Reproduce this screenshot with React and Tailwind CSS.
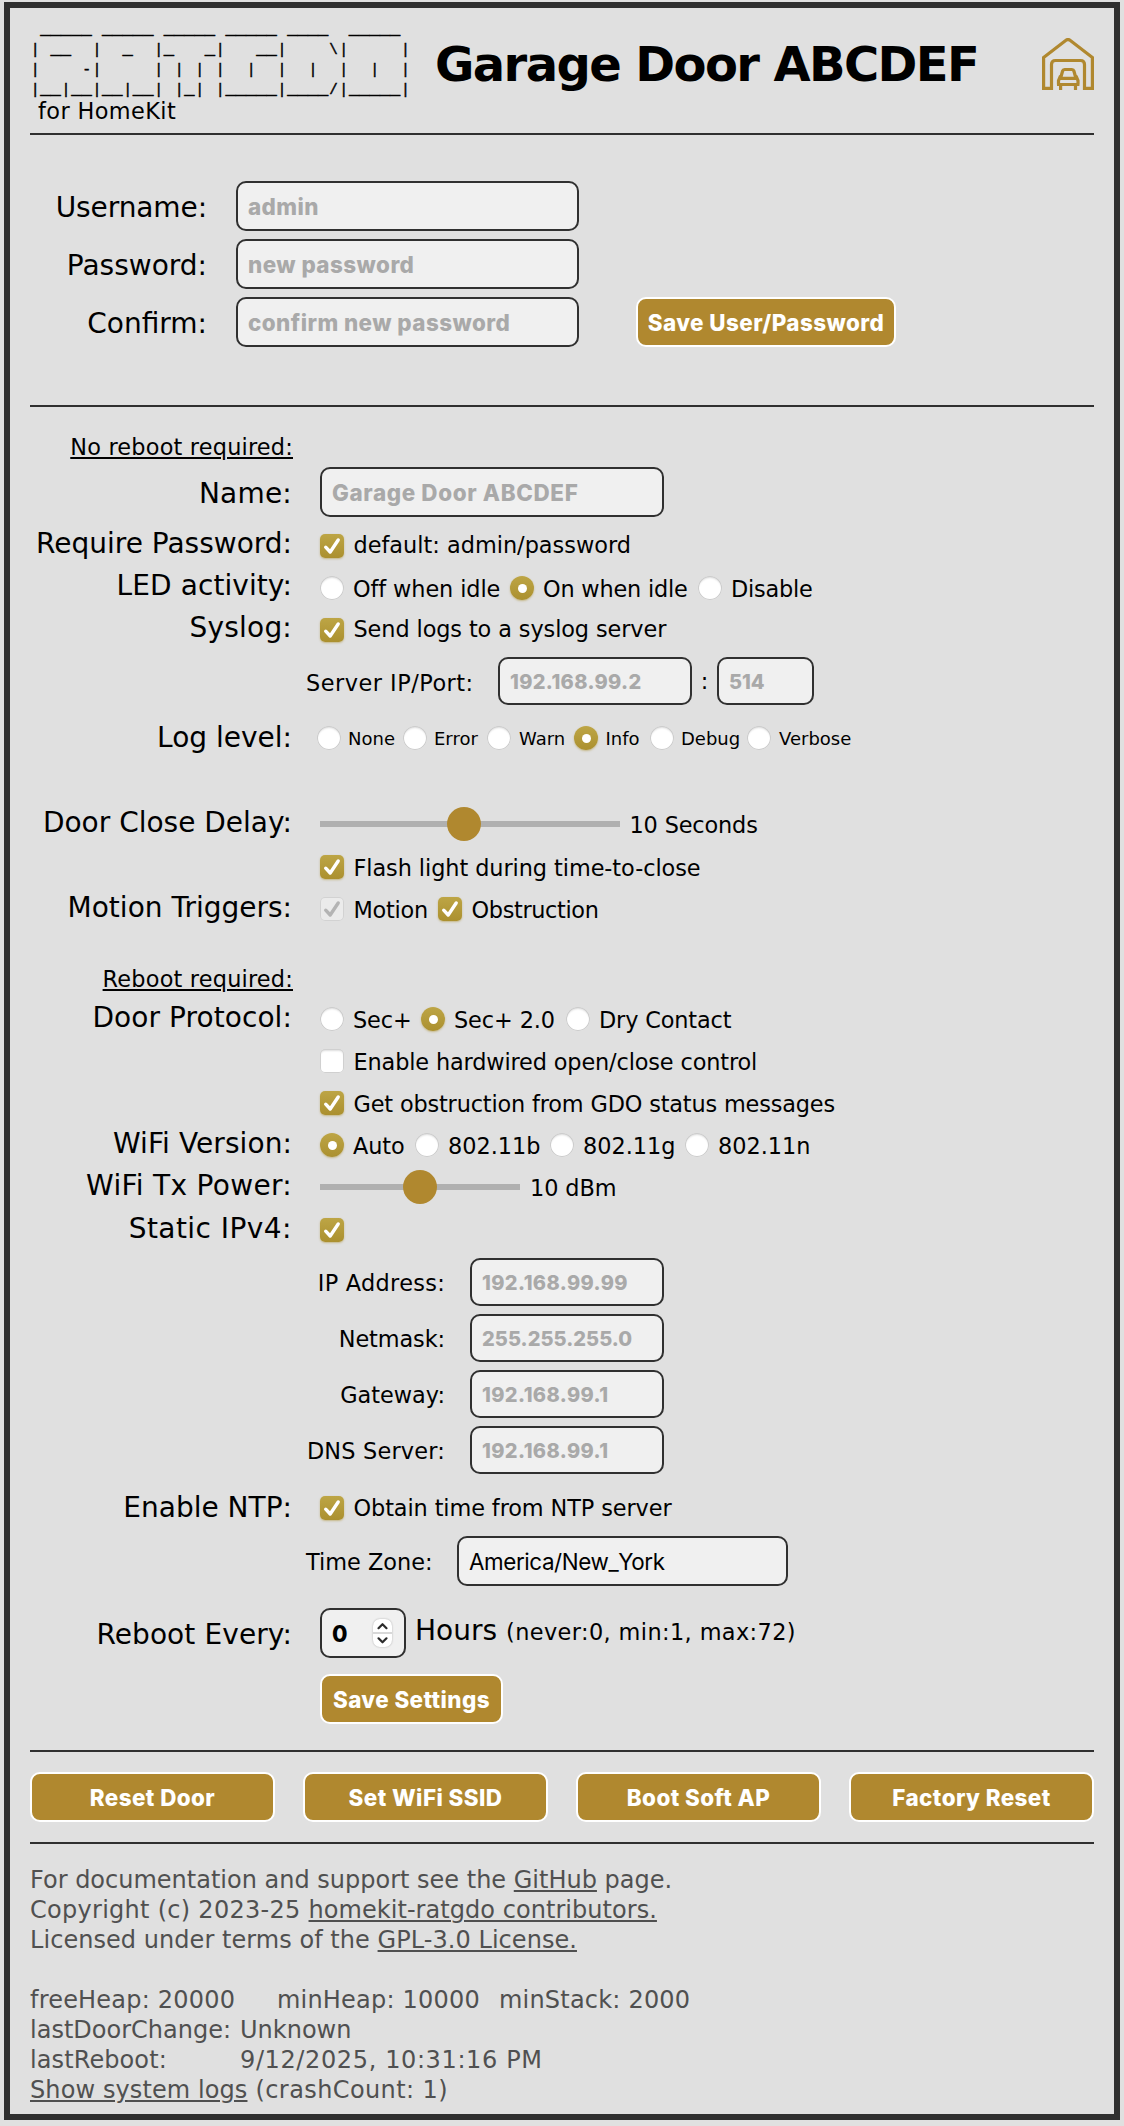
import React from "react";

const LOGO = [
  " _____ _____ _____ _____ ____  _____ ",
  "| __  |  _  |_   _|   __|    \\|     |",
  "|    -|     | | | |  |  |  |  |  |  |",
  "|__|__|__|__| |_| |_____|____/|_____|",
];

function Logo() {
  return (
    <pre className="font-['Liberation_Mono',monospace] text-[17.15px] leading-5 [-webkit-text-stroke:0.5px_black]">
      {LOGO.map((line, i) => (
        <div key={i} className="h-5">
          {line.split(/([|\\/-])/).map((part, j) =>
            j % 2 ? (
              <span key={j} className="inline-block w-[10.29px] text-center text-[14px] leading-[14px]">{part}</span>
            ) : (
              <span key={j}>{part}</span>
            )
          )}
        </div>
      ))}
    </pre>
  );
}

function GarageIcon() {
  return (
    <svg width="52" height="52" viewBox="0 0 52 52" fill="none" stroke="#b0882f" strokeWidth="3.2">
      <path d="M1.6 50.4V19.6L24 2.3Q26 .8 28 2.3L50.4 19.6V50.4H42.5V26.5Q42.5 22.5 38.5 22.5H13.5Q9.5 22.5 9.5 26.5V50.4Z" />
      <path d="M18.5 40.5L20.6 33Q21 31.5 22.6 31.5H29.9Q31.5 31.5 31.9 33L34 40.5M17.5 40.3H35M16.5 46.5V42.5L18.5 38M36 46.5V42.5L34 38M15 46.5H37.4M18.6 46.5V52M33.5 46.5V52" />
    </svg>
  );
}

function Tick({ color }) {
  return (
    <svg width="24" height="24" viewBox="0 0 24 24" fill="none" stroke={color} strokeWidth="3.4" strokeLinecap="round" strokeLinejoin="round">
      <path d="M5.7 13.2L10.2 18L18.2 6" />
    </svg>
  );
}

function Box({ state = "on" }) {
  if (state === "on")
    return (
      <span className="size-6 shrink-0 rounded-[5px] bg-linear-to-b from-[#bda545] to-[#ab902f] shadow-[0_1px_2px_rgba(171,144,47,0.5)]">
        <Tick color="#fff" />
      </span>
    );
  if (state === "disabled")
    return (
      <span className="size-6 shrink-0 rounded-[5px] bg-[#ebebeb] shadow-[inset_0_0_0_1px_#d2d2d2]">
        <Tick color="#b4b4b4" />
      </span>
    );
  return <span className="size-6 shrink-0 rounded-[5px] bg-white shadow-[inset_0_0_0_1px_#d0d0d0,inset_0_2px_2px_#dddddd]" />;
}

function Radio({ on }) {
  if (on)
    return (
      <span className="flex size-6 shrink-0 items-center justify-center rounded-full bg-linear-to-b from-[#bda545] to-[#ab902f] shadow-[0_1px_2px_rgba(171,144,47,0.5)]">
        <span className="size-[9px] rounded-full bg-white" />
      </span>
    );
  return <span className="size-6 shrink-0 rounded-full bg-white shadow-[inset_0_0_0_1px_#cccccc,inset_0_2px_2px_#dddddd]" />;
}

function Row({ label, className = "h-[42px]", labelClass = "pb-1 tracking-[0.08px]", children }) {
  return (
    <div className={`grid grid-cols-[262px_1fr] items-center gap-x-7 ${className}`}>
      <div className={`whitespace-nowrap text-right text-[28px] leading-8 ${labelClass}`}>{label}</div>
      <div className="flex items-center whitespace-nowrap text-[22.4px] leading-7">{children}</div>
    </div>
  );
}

function Option({ on, className = "", gap = "gap-[9px]", textClass = "-tracking-[0.1px]", children }) {
  return (
    <label className={`flex items-center ${gap} ${className}`}>
      <Radio on={on} />
      <span className={`pt-0.5 ${textClass}`}>{children}</span>
    </label>
  );
}

function Check({ state, className = "", textClass = "", children }) {
  return (
    <label className={`flex items-center gap-[9.5px] ${className}`}>
      <Box state={state} />
      <span className={textClass}>{children}</span>
    </label>
  );
}

function Field({ className = "", children }) {
  return (
    <div className={`flex shrink-0 items-center rounded-[10px] border-2 border-[#303030] bg-[#f0f0f0] px-2.5 pt-0.5 font-['Inter',sans-serif] font-extrabold text-[#a9a9a9] ${className}`}>
      {children}
    </div>
  );
}

function Button({ className = "", children }) {
  return (
    <button className={`h-[50px] whitespace-nowrap rounded-[10px] border-2 border-white bg-[#b0882f] pt-0.5 font-['Inter',sans-serif] text-[22.4px] font-extrabold tracking-[0.43px] text-white ${className}`}>
      {children}
    </button>
  );
}

function Slider({ className, thumbClass }) {
  return (
    <div className={`flex h-[34px] items-center bg-[linear-gradient(#b0b0b0,#b0b0b0)] bg-[length:100%_6px] bg-center bg-no-repeat ${className}`}>
      <span className={`size-[34px] rounded-full bg-[#b0882f] ${thumbClass}`} />
    </div>
  );
}

function Rule() {
  return <div className="h-0.5 bg-[#303030]" />;
}

function Login({ label, labelClass = "", children }) {
  return (
    <div className="flex h-[50px] items-center gap-[29px]">
      <span className={`w-[177px] pt-[3px] text-right text-[28px] leading-8 ${labelClass}`}>{label}</span>
      <Field className="h-[50px] w-[343px] text-[22.4px] tracking-[0.45px]">{children}</Field>
    </div>
  );
}

function Address({ label, labelClass = "tracking-[0.2px]", fieldClass = "tracking-[0.4px]", children }) {
  return (
    <div className="flex h-12 items-center gap-[25px] text-[22.4px]">
      <span className={`w-[153px] whitespace-nowrap pt-[3px] text-right ${labelClass}`}>{label}</span>
      <Field className={`h-12 w-[194px] text-[20px] ${fieldClass}`}>{children}</Field>
    </div>
  );
}

export default function App() {
  return (
    <div className="h-[2126px] bg-[#e0e0e0] px-1 pt-0.5 font-['Verdana','DejaVu_Sans',sans-serif] text-black">
      <div className="h-[2118px] border-6 border-[#303030] px-5">
        <header className="flex h-[125px]">
          <div className="w-[405px] shrink-0 pt-3">
            <Logo />
            <div className="-mt-0.5 pl-2 text-[22.4px] leading-[26px] tracking-[0.4px]">for HomeKit</div>
          </div>
          <h1 className="w-[607px] shrink-0 whitespace-nowrap pt-[26px] text-[48px] leading-[60px] font-bold -tracking-[1.6px]">Garage Door ABCDEF</h1>
          <div className="pt-[30px]">
            <GarageIcon />
          </div>
        </header>
        <Rule />
        <section className="flex h-[270px] items-start pt-[46px]">
          <div className="flex flex-col gap-2">
            <Login label="Username:" labelClass="-tracking-[0.1px]">admin</Login>
            <Login label="Password:">new password</Login>
            <Login label="Confirm:">confirm new password</Login>
          </div>
          <Button className="mt-[116px] ml-[57px] w-[260px]">Save User/Password</Button>
        </section>
        <Rule />
        <section className="h-[1343px] pt-[26px]">
          <div className="w-[263px] text-right text-[22.4px] leading-7 tracking-[0.2px]">
            <span className="underline decoration-2 underline-offset-2">No reboot required:</span>
          </div>
          <Row label="Name:" className="mt-1.5 h-[50px]" labelClass="pt-[3px] tracking-[0.2px]">
            <Field className="h-[50px] w-[344px] text-[22.4px] tracking-[0.65px]">Garage Door ABCDEF</Field>
          </Row>
          <Row label="Require Password:" className="mt-2 h-[42px]" labelClass="pb-1">
            <Check textClass="pb-0.5">default: admin/password</Check>
          </Row>
          <Row label="LED activity:">
            <Option className="w-[190px]">Off when idle</Option>
            <Option on className="w-[188px]" textClass="-tracking-[0.2px]">On when idle</Option>
            <Option textClass="-tracking-[0.2px]">Disable</Option>
          </Row>
          <Row label="Syslog:" labelClass="pb-1 tracking-[0.2px]">
            <Check textClass="pb-0.5 -tracking-[0.1px]">Send logs to a syslog server</Check>
          </Row>
          <Row className="h-[60px]">
            <span className="-ml-[14px] w-[192px] pt-[3px] tracking-[0.5px]">Server IP/Port:</span>
            <Field className="h-12 w-[194px] text-[20px] tracking-[0.35px]">192.168.99.2</Field>
            <span className="w-[25px] text-center">:</span>
            <Field className="h-12 w-[97px] text-[20px]">514</Field>
          </Row>
          <Row label="Log level:" className="h-[54px]" labelClass="">
            <div className="-ml-[3px] flex text-[18px]">
              <Option gap="gap-[7px]" textClass="" className="w-[86px]">None</Option>
              <Option gap="gap-[7px]" textClass="" className="w-[84px]">Error</Option>
              <Option gap="gap-2" textClass="" className="w-[87px]">Warn</Option>
              <Option gap="gap-[7.5px]" textClass="" on className="w-[76px]">Info</Option>
              <Option gap="gap-[7px]" textClass="" className="w-[97px]">Debug</Option>
              <Option gap="gap-2" textClass="">Verbose</Option>
            </div>
          </Row>
          <Row label="Door Close Delay:" className="mt-[38px] h-[42px]" labelClass="pb-0.5">
            <Slider className="w-[300px]" thumbClass="ml-[127px]" />
            <span className="ml-[9.5px] pt-0.5 -tracking-[0.15px]">10 Seconds</span>
          </Row>
          <Row className="mt-px h-[42px]">
            <Check textClass="pt-0.5 -tracking-[0.07px]">Flash light during time-to-close</Check>
          </Row>
          <Row label="Motion Triggers:" labelClass="pb-0.5">
            <Check state="disabled" className="w-[118px]" textClass="pt-0.5 -tracking-[0.25px]">Motion</Check>
            <Check textClass="pt-0.5 -tracking-[0.35px]">Obstruction</Check>
          </Row>
          <div className="h-[68px] w-[263px] pt-[35px] text-right text-[22.4px] leading-7 tracking-[0.2px]">
            <span className="underline decoration-2 underline-offset-2">Reboot required:</span>
          </div>
          <Row label="Door Protocol:" labelClass="pb-0.5 tracking-[0.08px]">
            <Option className="w-[101px]">Sec+</Option>
            <Option on className="w-[145px]">Sec+ 2.0</Option>
            <Option textClass="-tracking-[0.15px]">Dry Contact</Option>
          </Row>
          <Row>
            <Check state="off" textClass="pt-0.5 -tracking-[0.14px]">Enable hardwired open/close control</Check>
          </Row>
          <Row>
            <Check textClass="pt-0.5 -tracking-[0.16px]">Get obstruction from GDO status messages</Check>
          </Row>
          <Row label="WiFi Version:" labelClass="pb-0.5 tracking-[0.08px]">
            <Option on className="w-[95px]">Auto</Option>
            <Option className="w-[135px]" textClass="">802.11b</Option>
            <Option className="w-[135px]" textClass="">802.11g</Option>
            <Option textClass="">802.11n</Option>
          </Row>
          <Row label="WiFi Tx Power:" labelClass="pb-0.5 tracking-[0.3px]">
            <Slider className="w-[200px]" thumbClass="ml-[83px]" />
            <span className="ml-[10px] pt-0.5 -tracking-[0.1px]">10 dBm</span>
          </Row>
          <Row label="Static IPv4:" className="h-11" labelClass="pb-0.5 tracking-[0.45px]">
            <Check />
          </Row>
          <div className="ml-[262px] flex flex-col gap-2 pt-1.5">
            <Address label="IP Address:" labelClass="tracking-[0.3px]">192.168.99.99</Address>
            <Address label="Netmask:" labelClass="-tracking-[0.1px]" fieldClass="tracking-[0.05px]">255.255.255.0</Address>
            <Address label="Gateway:" labelClass="">192.168.99.1</Address>
            <Address label="DNS Server:">192.168.99.1</Address>
          </div>
          <Row label="Enable NTP:" className="mt-[13px] h-[42px]" labelClass="pb-px">
            <Check textClass="-tracking-[0.1px]">Obtain time from NTP server</Check>
          </Row>
          <Row className="mt-[7px] h-[50px]">
            <span className="-ml-[14px] w-[151px] pt-0.5">Time Zone:</span>
            <Field className="h-[50px] w-[331px] text-[22.4px] -tracking-[0.4px]">
              <span className="font-normal text-black">America/New_York</span>
            </Field>
          </Row>
          <Row label="Reboot Every:" className="mt-[22px] h-[50px]" labelClass="pt-1 tracking-[0.1px]">
            <Field className="h-[50px] w-[86px] text-[22.4px]">
              <span className="grow text-black">0</span>
              <span className="mr-0.5 mb-0.5 h-7 w-[19px] rounded-[7px] bg-white shadow-[0_0_2px_rgba(0,0,0,0.3)]">
                <svg width="19" height="28" viewBox="0 0 19 28" fill="none">
                  <path d="M0 14H19" stroke="#d8d8d8" strokeWidth="2" />
                  <path d="M5.5 9.2L9.5 5.2L13.5 9.2M5.5 19.3L9.5 23.3L13.5 19.3" stroke="#2b2b2b" strokeWidth="2.2" strokeLinecap="round" strokeLinejoin="round" />
                </svg>
              </span>
            </Field>
            <div className="flex items-baseline gap-[9px] pb-1 pl-[9px]">
              <span className="text-[28px] leading-8">Hours</span>
              <span className="tracking-[0.4px]">(never:0, min:1, max:72)</span>
            </div>
          </Row>
          <Button className="mt-4 ml-[290px] block w-[183px]">Save Settings</Button>
        </section>
        <Rule />
        <section className="grid h-[90px] grid-cols-4 items-center gap-7">
          <Button>Reset Door</Button>
          <Button>Set WiFi SSID</Button>
          <Button>Boot Soft AP</Button>
          <Button>Factory Reset</Button>
        </section>
        <Rule />
        <footer className="whitespace-nowrap pt-[21px] text-[24px] leading-[30px] text-[#505050] [&_a]:underline [&_a]:decoration-2 [&_a]:underline-offset-2">
          <div>For documentation and support see the <a>GitHub</a> page.</div>
          <div><span className="tracking-[0.28px]">Copyright (c) 2023-25 </span><a className="tracking-[0.05px]">homekit-ratgdo contributors.</a></div>
          <div className="tracking-[0.05px]">Licensed under terms of the <a>GPL-3.0 License.</a></div>
          <div className="mt-[30px] flex tracking-[0.2px]">
            <span className="w-[247px]">freeHeap: 20000</span>
            <span className="w-[222px]">minHeap: 10000</span>
            <span>minStack: 2000</span>
          </div>
          <div className="flex">
            <span className="w-[210px]">lastDoorChange:</span>
            <span>Unknown</span>
          </div>
          <div className="flex">
            <span className="w-[210px] tracking-[0.1px]">lastReboot:</span>
            <span className="tracking-[0.62px]">9/12/2025, 10:31:16 PM</span>
          </div>
          <div><a className="tracking-[0.1px]">Show system logs</a><span className="tracking-[0.4px]"> (crashCount: 1)</span></div>
        </footer>
      </div>
    </div>
  );
}
